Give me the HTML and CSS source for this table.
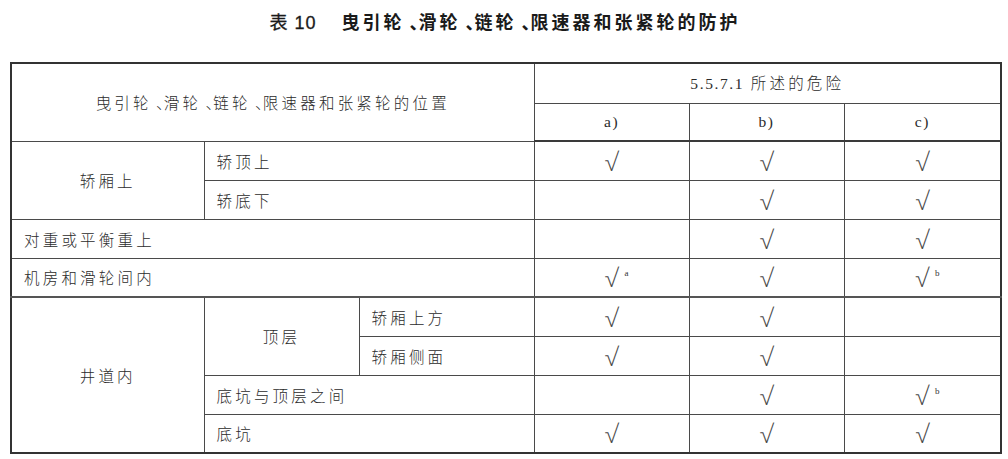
FILE: index.html
```html
<!DOCTYPE html>
<html lang="zh">
<head>
<meta charset="utf-8">
<link rel="stylesheet" href="styles.css">
</head>
<body>
<div class="page">
  <h1 class="title"><span class="num">表 10</span><span class="name">曳引轮<span class="dun">、</span>滑轮<span class="dun">、</span>链轮<span class="dun">、</span>限速器和张紧轮的防护</span></h1>
  <table class="tbl">
    <colgroup>
      <col class="c1"><col class="c2"><col class="c3"><col class="ca"><col class="cb"><col class="cc">
    </colgroup>
    <thead>
      <tr class="h1">
        <th colspan="3" rowspan="2" class="center">曳引轮<span class="dun">、</span>滑轮<span class="dun">、</span>链轮<span class="dun">、</span>限速器和张紧轮的位置</th>
        <th colspan="3" class="center"><span class="lat">5.5.7.1</span> 所述的危险</th>
      </tr>
      <tr class="h2">
        <th class="center lat">a)</th>
        <th class="center lat">b)</th>
        <th class="center lat">c)</th>
      </tr>
    </thead>
    <tbody>
      <tr>
        <td rowspan="2" class="center">轿厢上</td>
        <td colspan="2">轿顶上</td>
        <td class="chk">√</td><td class="chk">√</td><td class="chk">√</td>
      </tr>
      <tr>
        <td colspan="2">轿底下</td>
        <td class="chk"></td><td class="chk">√</td><td class="chk">√</td>
      </tr>
      <tr>
        <td colspan="3">对重或平衡重上</td>
        <td class="chk"></td><td class="chk">√</td><td class="chk">√</td>
      </tr>
      <tr>
        <td colspan="3">机房和滑轮间内</td>
        <td class="chk">√<sup>a</sup></td><td class="chk">√</td><td class="chk">√<sup>b</sup></td>
      </tr>
      <tr class="sep">
        <td rowspan="4" class="center">井道内</td>
        <td rowspan="2" class="center">顶层</td>
        <td>轿厢上方</td>
        <td class="chk">√</td><td class="chk">√</td><td class="chk"></td>
      </tr>
      <tr>
        <td>轿厢侧面</td>
        <td class="chk">√</td><td class="chk">√</td><td class="chk"></td>
      </tr>
      <tr>
        <td colspan="2">底坑与顶层之间</td>
        <td class="chk"></td><td class="chk">√</td><td class="chk">√<sup>b</sup></td>
      </tr>
      <tr>
        <td colspan="2">底坑</td>
        <td class="chk">√</td><td class="chk">√</td><td class="chk">√</td>
      </tr>
    </tbody>
  </table>
</div>
</body>
</html>
```

FILE: styles.css
```css
html, body {
  margin: 0;
  padding: 0;
  background: #ffffff;
}

.page {
  padding: 4px 8px 0 10px;
  font-family: "Noto Sans CJK SC", "Noto Sans", sans-serif;
  color: #2b2b2b;
}

.title {
  margin: 0 0 25px 0;
  height: 33px;
  display: flex;
  justify-content: center;
  align-items: center;
  font-size: 18px;
  font-weight: 700;
  color: #1a1a1a;
  letter-spacing: 3px;
}

.title .num {
  letter-spacing: 1px;
  margin-right: 25px;
  font-family: "Liberation Sans", "Noto Sans CJK SC", sans-serif;
  font-weight: 400;
  -webkit-text-stroke: 0.3px #1a1a1a;
}

.dun {
  font-feature-settings: "halt" 1;
  margin-left: 0.28em;
  letter-spacing: 0;
}

.tbl {
  width: 990px;
  border-collapse: collapse;
  table-layout: fixed;
  border: 2px solid #333;
  font-size: 15.5px;
  letter-spacing: 3.2px;
}

.c1 { width: 193px; }
.c2 { width: 155px; }
.c3 { width: 175px; }
.ca { width: 155px; }
.cb { width: 155px; }
.cc { width: 157px; }

.tbl th,
.tbl td {
  border: 1px solid #4a4a4a;
  padding: 0 0 0 12px;
  text-align: left;
  font-weight: 300;
  height: 39px;
  box-sizing: border-box;
  line-height: 20px;
  white-space: nowrap;
}

.tbl .h1 th { height: 40px; }
.tbl .h2 th { height: 38px; }

.tbl .center {
  text-align: center;
  padding: 0;
}

.lat {
  font-family: "Liberation Serif", serif;
  font-size: 15.5px;
  letter-spacing: 1.6px;
  font-weight: 400;
}

.tbl thead tr.h2 th {
  border-bottom: 2px solid #3a3a3a;
}

.tbl tr.sep td {
  border-top: 2px solid #555;
}

.tbl td.chk {
  text-align: center;
  padding: 0;
  font-family: "Open Sans", sans-serif;
  font-weight: 300;
  font-size: 25px;
  line-height: 24px;
  color: #4a4a4a;
  letter-spacing: 0;
}

.tbl td.chk sup {
  font-family: "Liberation Serif", serif;
  font-weight: 400;
  font-size: 9px;
  margin-left: 6px;
  margin-right: -10px;
  vertical-align: 11px;
  line-height: 0;
  color: #333;
}
```
